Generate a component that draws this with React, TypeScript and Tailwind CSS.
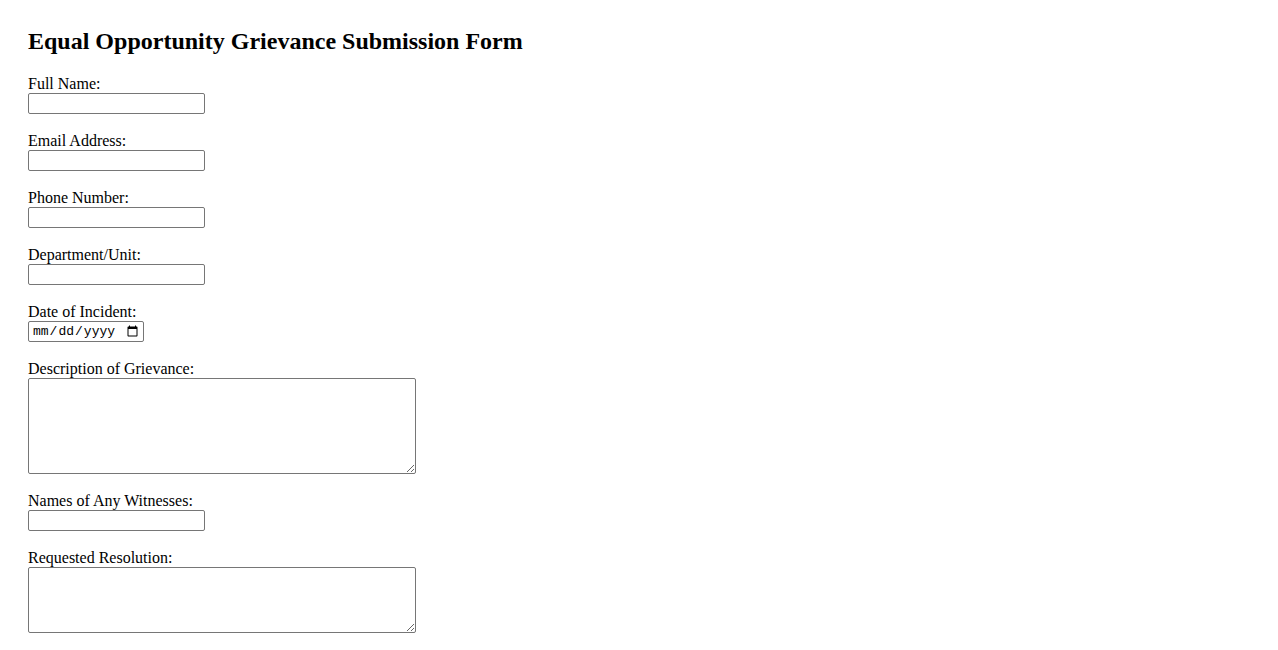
import { useState } from 'react';

const fields = [
  { id: 'name', label: 'Full Name:', type: 'text' },
  { id: 'email', label: 'Email Address:', type: 'email' },
  { id: 'phone', label: 'Phone Number:', type: 'tel' },
  { id: 'dept', label: 'Department/Unit:', type: 'text' },
];

export default function App() {
  const [values, setValues] = useState<Record<string, string>>({});
  const set = (k: string, v: string) => setValues(prev => ({ ...prev, [k]: v }));

  return (
    <div className="min-h-screen bg-white px-[28px] pt-[28px] text-black font-['Liberation_Serif','Times_New_Roman',serif]">
      <h2 className="text-[24px] leading-[27px] font-bold mb-[20px]">Equal Opportunity Grievance Submission Form</h2>
      <form className="flex flex-col" onSubmit={e => e.preventDefault()}>
        {fields.map(f => (
          <div key={f.id} className="flex flex-col items-start mb-[18px]">
            <label htmlFor={f.id} className="text-[16px] leading-[18px]">{f.label}</label>
            <input
              id={f.id}
              type={f.type}
              value={values[f.id] || ''}
              onChange={e => set(f.id, e.target.value)}
              className="w-[177px] h-[21px] border border-[#767676] rounded-[2px] px-[2px] text-[13px] bg-white"
            />
          </div>
        ))}

        {/* Date */}
        <div className="flex flex-col items-start mb-[18px]">
          <label htmlFor="date" className="text-[16px] leading-[18px]">Date of Incident:</label>
          <input
            id="date"
            type="date"
            className="w-[116px] h-[21px] border border-[#767676] rounded-[2px] pl-[3px] pr-[2px] text-[13px] font-['Liberation_Mono',monospace] bg-white"
          />
        </div>

        <div className="flex flex-col items-start mb-[18px]">
          <label htmlFor="desc" className="text-[16px] leading-[18px]">Description of Grievance:</label>
          <textarea id="desc" className="w-[388px] h-[96px] border border-[#767676] rounded-[2px] p-[2px] text-[13px] font-['Liberation_Mono',monospace]" />
        </div>

        <div className="flex flex-col items-start mb-[18px]">
          <label htmlFor="witness" className="text-[16px] leading-[18px]">Names of Any Witnesses:</label>
          <input id="witness" type="text" className="w-[177px] h-[21px] border border-[#767676] rounded-[2px] px-[2px] text-[13px] bg-white" />
        </div>

        <div className="flex flex-col items-start mb-[18px]">
          <label htmlFor="res" className="text-[16px] leading-[18px]">Requested Resolution:</label>
          <textarea id="res" className="w-[388px] h-[66px] border border-[#767676] rounded-[2px] p-[2px] text-[13px] font-['Liberation_Mono',monospace]" />
        </div>
      </form>
    </div>
  );
}
